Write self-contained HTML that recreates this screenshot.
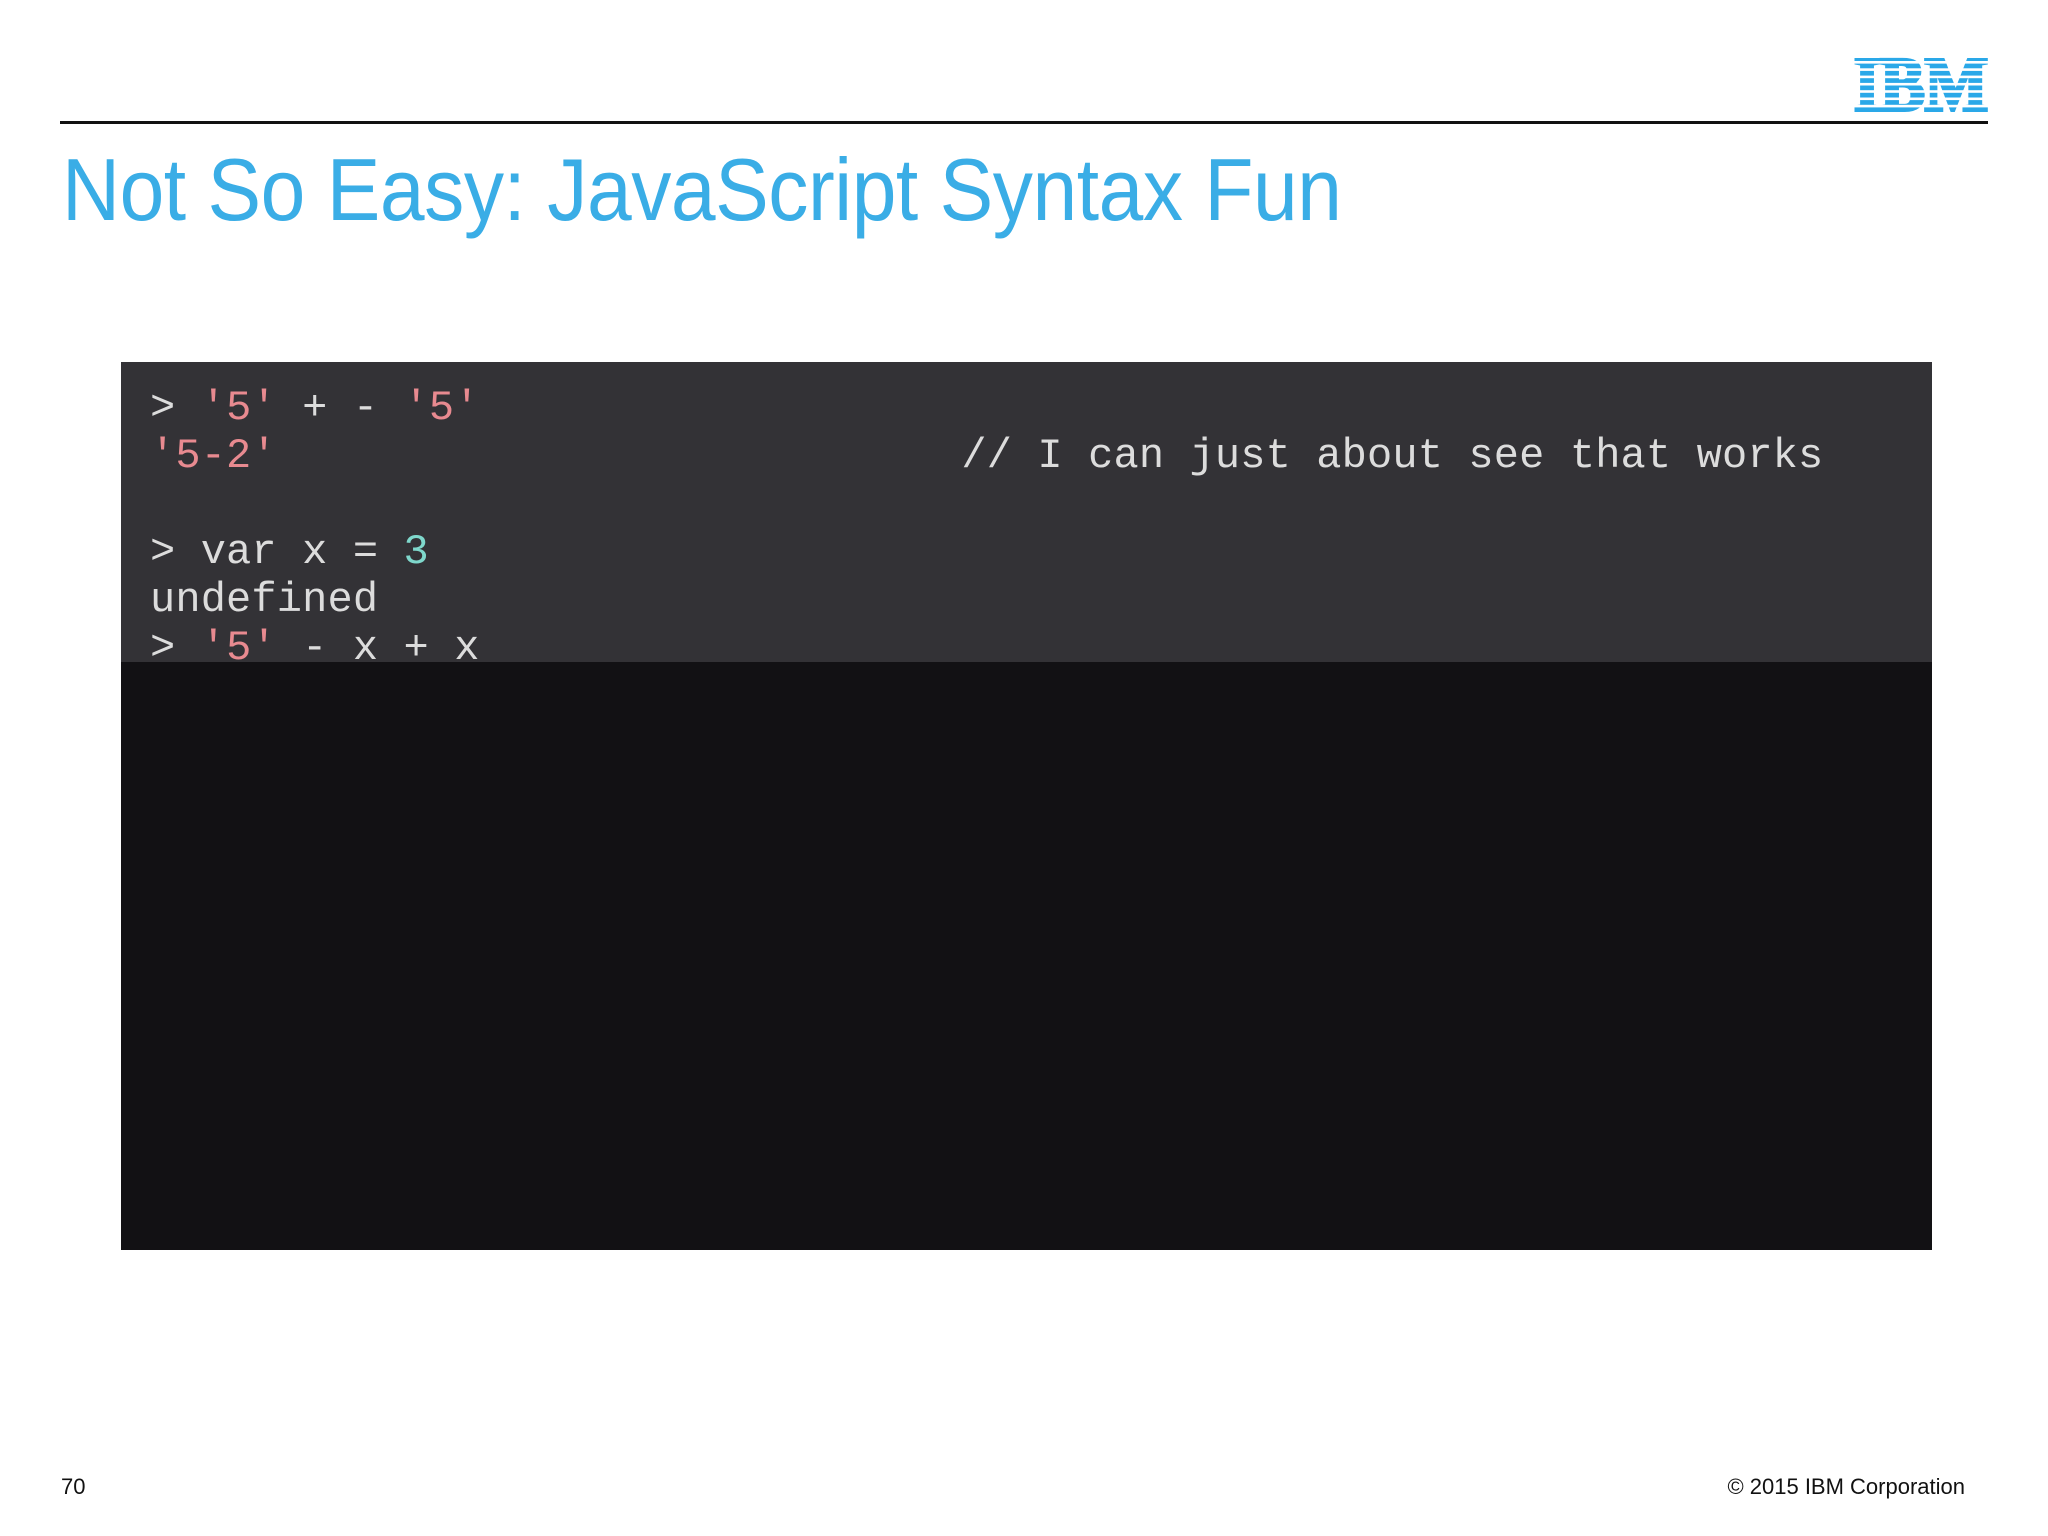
<!DOCTYPE html>
<html><head><meta charset="utf-8"><style>
html,body{margin:0;padding:0;background:#fff;}
body{width:2048px;height:1536px;position:relative;overflow:hidden;font-family:"Liberation Sans",sans-serif;}
.rule{position:absolute;left:60px;top:121px;width:1928px;height:3px;background:#111;}
.title{position:absolute;left:62px;top:146px;font-size:88px;color:#3aade6;white-space:nowrap;letter-spacing:-0.5px;line-height:1;transform:scaleX(0.913);transform-origin:0 0;}
.box{position:absolute;left:121px;top:362px;width:1811px;height:888px;background:#121114;overflow:hidden;}
.top{position:absolute;left:0;top:0;width:100%;height:300px;background:#333236;overflow:hidden;}
pre{position:absolute;left:29px;top:22px;margin:0;font-family:"Liberation Mono",monospace;font-size:42px;line-height:48px;color:#dcdcdc;letter-spacing:0.15px;}
.s{color:#e88a90}.n{color:#7fd8cc}
.foot{position:absolute;font-size:22px;color:#111;top:1474px;}
</style></head><body>
<svg style="position:absolute;left:1853px;top:55px" width="137" height="58" viewBox="0 0 137 58">
<defs><mask id="m"><rect width="137" height="58" fill="#fff"/>
<rect y="6" width="137" height="2.6" fill="#000"/><rect y="13.3" width="137" height="2.6" fill="#000"/><rect y="20.6" width="137" height="2.6" fill="#000"/><rect y="27.9" width="137" height="2.6" fill="#000"/><rect y="35.2" width="137" height="2.6" fill="#000"/><rect y="42.5" width="137" height="2.6" fill="#000"/><rect y="49.8" width="137" height="2.6" fill="#000"/></mask></defs>
<text x="68" y="55" text-anchor="middle" textLength="134" lengthAdjust="spacingAndGlyphs" font-family="Liberation Serif,serif" font-weight="bold" font-size="76" fill="#2aa8e8" stroke="#2aa8e8" stroke-width="4" mask="url(#m)">IBM</text>
</svg>
<div class="rule"></div>
<div class="title">Not So Easy: JavaScript Syntax Fun</div>
<div class="box"><div class="top"><pre>&gt; <span class="s">'5'</span> + - <span class="s">'5'</span>
<span class="s">'5-2'</span>                           // I can just about see that works

&gt; var x = <span class="n">3</span>
undefined
&gt; <span class="s">'5'</span> - x + x</pre></div></div>
<div class="foot" style="left:61px">70</div>
<div class="foot" style="right:83px">© 2015 IBM Corporation</div>
</body></html>
